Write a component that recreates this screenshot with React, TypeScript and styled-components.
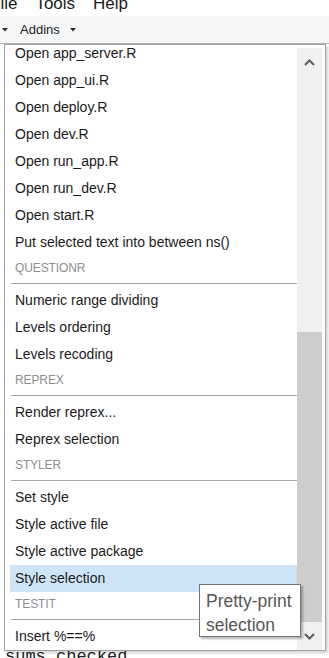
import React from 'react';
import styled, { createGlobalStyle } from 'styled-components';

const GlobalStyle = createGlobalStyle`
	html, body {
		margin: 0;
		padding: 0;
		background: #ffffff;
	}
	body {
		font-family: 'Liberation Sans', Arial, sans-serif;
	}
`;

const Frame = styled.div`
	position: relative;
	width: 329px;
	height: 658px;
	overflow: hidden;
	display: flex;
	flex-direction: column;
	background: #ffffff;
`;

const MenuBar = styled.div`
	height: 16px;
	overflow: hidden;
	display: flex;
	flex-shrink: 0;
	background: #ffffff;
`;

const MenuLabels = styled.div`
	display: flex;
	gap: 18px;
	margin-top: -6px;
	margin-left: -10px;
	font-size: 17px;
	line-height: 20px;
	color: #1c1c1c;
`;

const Toolbar = styled.div`
	height: 27px;
	flex-shrink: 0;
	display: flex;
	align-items: center;
	padding-left: 2px;
	background: #f3f5f6;
	border-bottom: 1px solid #b4b4b4;
	font-size: 13px;
	color: #1e1e1e;
`;

const ToolLabel = styled.span`
	margin: 0 10px 0 12px;
	line-height: 27px;
`;

const Workspace = styled.div`
	flex: 1;
	display: flex;
	flex-direction: column;
	justify-content: flex-end;
	overflow: hidden;
	background: #ffffff;
`;

const CodeLine = styled.div`
	margin: 0 0 -9px 5px;
	font-family: 'Liberation Mono', 'Courier New', monospace;
	font-size: 17px;
	line-height: 20px;
	color: #222222;
`;

const Dropdown = styled.div`
	position: absolute;
	top: 44px;
	left: 4px;
	width: 322px;
	height: 607px;
	box-sizing: border-box;
	display: flex;
	background: #ffffff;
	border: 1px solid #a3a3a3;
	box-shadow: 2px 2px 3px rgba(0, 0, 0, 0.18);
`;

const ItemList = styled.div`
	flex: 1;
	overflow: hidden;
	padding-left: 5px;
`;

const ItemScroller = styled.div`
	margin-top: -5px;
`;

const Item = styled.div<{ $active?: boolean }>`
	height: 27px;
	line-height: 27px;
	padding-left: 5px;
	font-size: 14px;
	color: #1b1b1b;
	white-space: nowrap;
	background: ${(p) => (p.$active ? '#cde5f7' : 'transparent')};
`;

const GroupHeader = styled.div`
	height: 24px;
	line-height: 24px;
	padding-left: 5px;
	font-size: 12px;
	letter-spacing: -0.1px;
	color: #8e8e8e;
`;

const Separator = styled.div`
	height: 7px;
	display: flex;
	align-items: center;
	padding-left: 1px;

	&::after {
		content: '';
		flex: 1;
		height: 1px;
		background: #aaaaaa;
	}
`;

const Scrollbar = styled.div`
	width: 25px;
	margin-right: 3px;
	padding-top: 3px;
	display: flex;
	flex-direction: column;
`;

const ScrollButton = styled.div`
	height: 28px;
	flex-shrink: 0;
	display: flex;
	align-items: center;
	justify-content: center;
	background: #f0f0f0;
`;

const Track = styled.div`
	flex: 1;
	display: flex;
	flex-direction: column;
	justify-content: flex-end;
	background: #f0f0f0;
`;

const Thumb = styled.div<{ $size: number }>`
	height: ${(p) => p.$size}px;
	background: #cdcdcd;
`;

const Tooltip = styled.div`
	position: absolute;
	left: 199px;
	top: 584px;
	width: 102px;
	height: 53px;
	box-sizing: border-box;
	padding: 4px 0 0 6px;
	background: #ffffff;
	border: 1px solid #767676;
	box-shadow: 2px 2px 2px rgba(0, 0, 0, 0.28);
	font-size: 17.5px;
	line-height: 24px;
	color: #575757;
	white-space: nowrap;
`;

const Caret = () => (
	<svg width="6" height="4" viewBox="0 0 6 4">
		<polygon points="0,0 6,0 3,3.5" fill="#2a2a2a" />
	</svg>
);

const Chevron = ({ up }: { up?: boolean }) => (
	<svg width="11" height="7" viewBox="0 0 11 7">
		<polyline
			points={up ? '1,6 5.5,1.5 10,6' : '1,1 5.5,5.5 10,1'}
			fill="none"
			stroke="#5f5f5f"
			strokeWidth="2"
		/>
	</svg>
);

type Group = { title?: string; items: string[] };

const groups: Group[] = [
	{
		items: [
			'Open app_server.R',
			'Open app_ui.R',
			'Open deploy.R',
			'Open dev.R',
			'Open run_app.R',
			'Open run_dev.R',
			'Open start.R',
			'Put selected text into between ns()'
		]
	},
	{ title: 'QUESTIONR', items: ['Numeric range dividing', 'Levels ordering', 'Levels recoding'] },
	{ title: 'REPREX', items: ['Render reprex...', 'Reprex selection'] },
	{ title: 'STYLER', items: ['Set style', 'Style active file', 'Style active package', 'Style selection'] },
	{ title: 'TESTIT', items: ['Insert %==%'] }
];

const activeItem = 'Style selection';

export default function App() {
	return (
		<>
			<GlobalStyle />
			<Frame>
				<MenuBar>
					<MenuLabels>
						<span>File</span>
						<span>Tools</span>
						<span>Help</span>
					</MenuLabels>
				</MenuBar>
				<Toolbar>
					<Caret />
					<ToolLabel>Addins</ToolLabel>
					<Caret />
				</Toolbar>
				<Workspace>
					<CodeLine>sums_checked</CodeLine>
				</Workspace>

				<Dropdown>
					<ItemList>
						<ItemScroller>
							{groups.map((group, i) => (
								<React.Fragment key={i}>
									{group.title && (
										<>
											<GroupHeader>{group.title}</GroupHeader>
											<Separator />
										</>
									)}
									{group.items.map((label) => (
										<Item key={label} $active={label === activeItem}>
											{label}
										</Item>
									))}
								</React.Fragment>
							))}
						</ItemScroller>
					</ItemList>
					<Scrollbar>
						<ScrollButton>
							<Chevron up />
						</ScrollButton>
						<Track>
							<Thumb $size={290} />
						</Track>
						<ScrollButton>
							<Chevron />
						</ScrollButton>
					</Scrollbar>
				</Dropdown>

				<Tooltip>
					Pretty-print
					<br />
					selection
				</Tooltip>
			</Frame>
		</>
	);
}
